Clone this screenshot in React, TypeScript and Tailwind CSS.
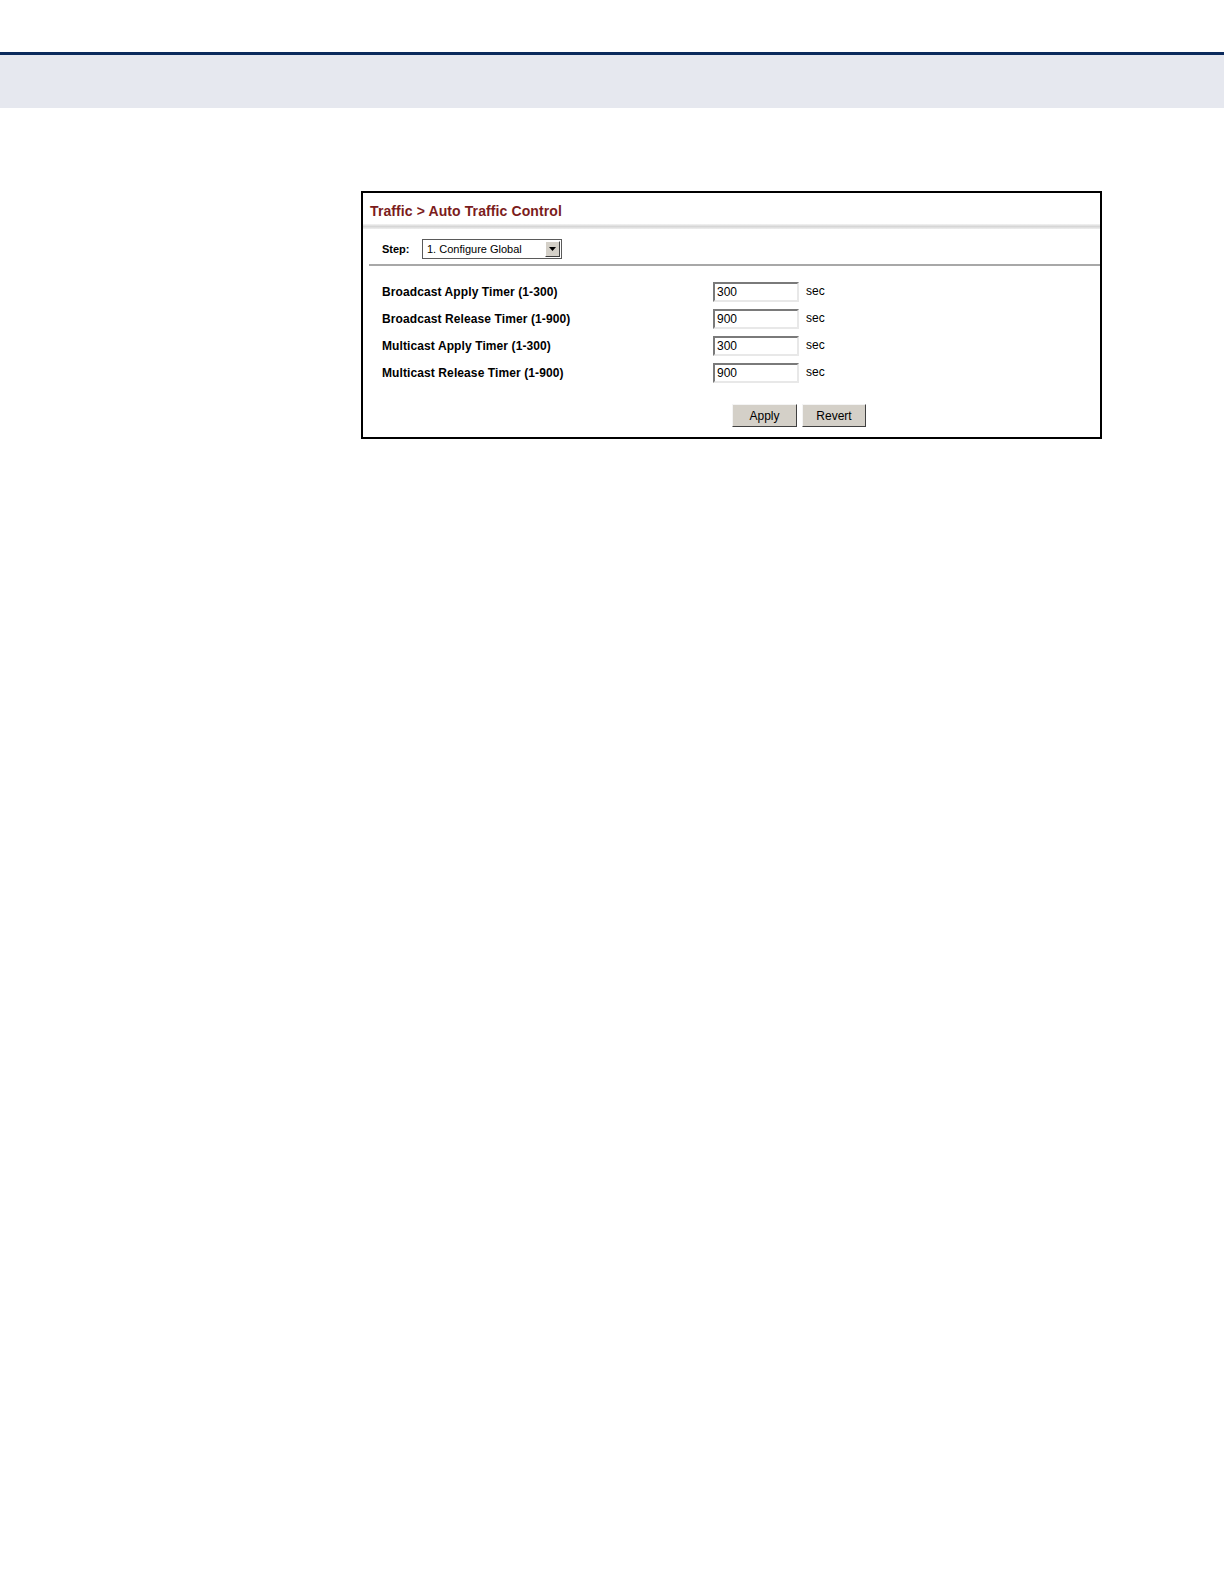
const rows = [
  { label: "Broadcast Apply Timer (1-300)", value: "300" },
  { label: "Broadcast Release Timer (1-900)", value: "900" },
  { label: "Multicast Apply Timer (1-300)", value: "300" },
  { label: "Multicast Release Timer (1-900)", value: "900" },
];

export default function App() {
  return (
    <div className="min-h-[1584px] w-[1224px] bg-white font-['Liberation_Sans',Arial,sans-serif] text-black">
      {/* page header */}
      <div className="h-[52px]" />
      <div className="h-[3px] bg-[#0b2a5c]" />
      <div className="h-[53px] bg-[#e6e8ef]" />

      {/* screen capture */}
      <div className="ml-[361px] mt-[83px] w-[741px] h-[248px] border-2 border-black bg-white">
        <div className="h-[31px] flex items-center pl-[7px] pt-[6px]">
          <span className="text-[14px] font-bold text-[#7b1c1c] tracking-[0.1px]">
            Traffic &gt; Auto Traffic Control
          </span>
        </div>
        <div className="h-[5px] bg-gradient-to-b from-[#f4f4f4] via-[#d6d6d6] to-[#efefef]" />

        <div className="h-[35px] flex items-start pt-[10px] pl-[19px]">
          <span className="text-[11px] font-bold w-[40px] leading-[20px]">Step:</span>
          <div className="flex items-center h-[20px] w-[140px] border border-[#5a5a5a] bg-white">
            <span className="flex-1 text-[11px] pl-[4px] leading-none">1. Configure Global</span>
            <div className="w-[15px] h-[16px] mr-[1px] bg-[#d4d0c8] border border-t-white border-l-white border-b-[#404040] border-r-[#404040] flex items-center justify-center">
              <svg width="7" height="4" viewBox="0 0 7 4">
                <path d="M0 0H7L3.5 4Z" fill="#000" />
              </svg>
            </div>
          </div>
        </div>
        <div className="ml-[6px] h-[2px] bg-[#a8a8a8]" />

        <div className="pt-[16px] pl-[19px] flex flex-col gap-[7px]">
          {rows.map((r) => (
            <div key={r.label} className="flex items-center h-[20px]">
              <span className="w-[331px] text-[12px] font-bold tracking-[0.1px]">{r.label}</span>
              <div className="w-[86px] h-[20px] border-2 border-t-[#7a7a7a] border-l-[#7a7a7a] border-b-[#e8e8e8] border-r-[#e8e8e8] bg-white flex items-center pl-[2px] text-[12px]">
                {r.value}
              </div>
              <span className="ml-[7px] text-[12px] -mt-[2px]">sec</span>
            </div>
          ))}
        </div>

        <div className="flex gap-[5px] ml-[369px] mt-[21px]">
          <button className="w-[65px] h-[23px] bg-[#d4d0c8] border border-t-[#f4f4f4] border-l-[#f4f4f4] border-b-[#404040] border-r-[#404040] text-[12px]">
            Apply
          </button>
          <button className="w-[64px] h-[23px] bg-[#d4d0c8] border border-t-[#f4f4f4] border-l-[#f4f4f4] border-b-[#404040] border-r-[#404040] text-[12px]">
            Revert
          </button>
        </div>
      </div>
    </div>
  );
}
